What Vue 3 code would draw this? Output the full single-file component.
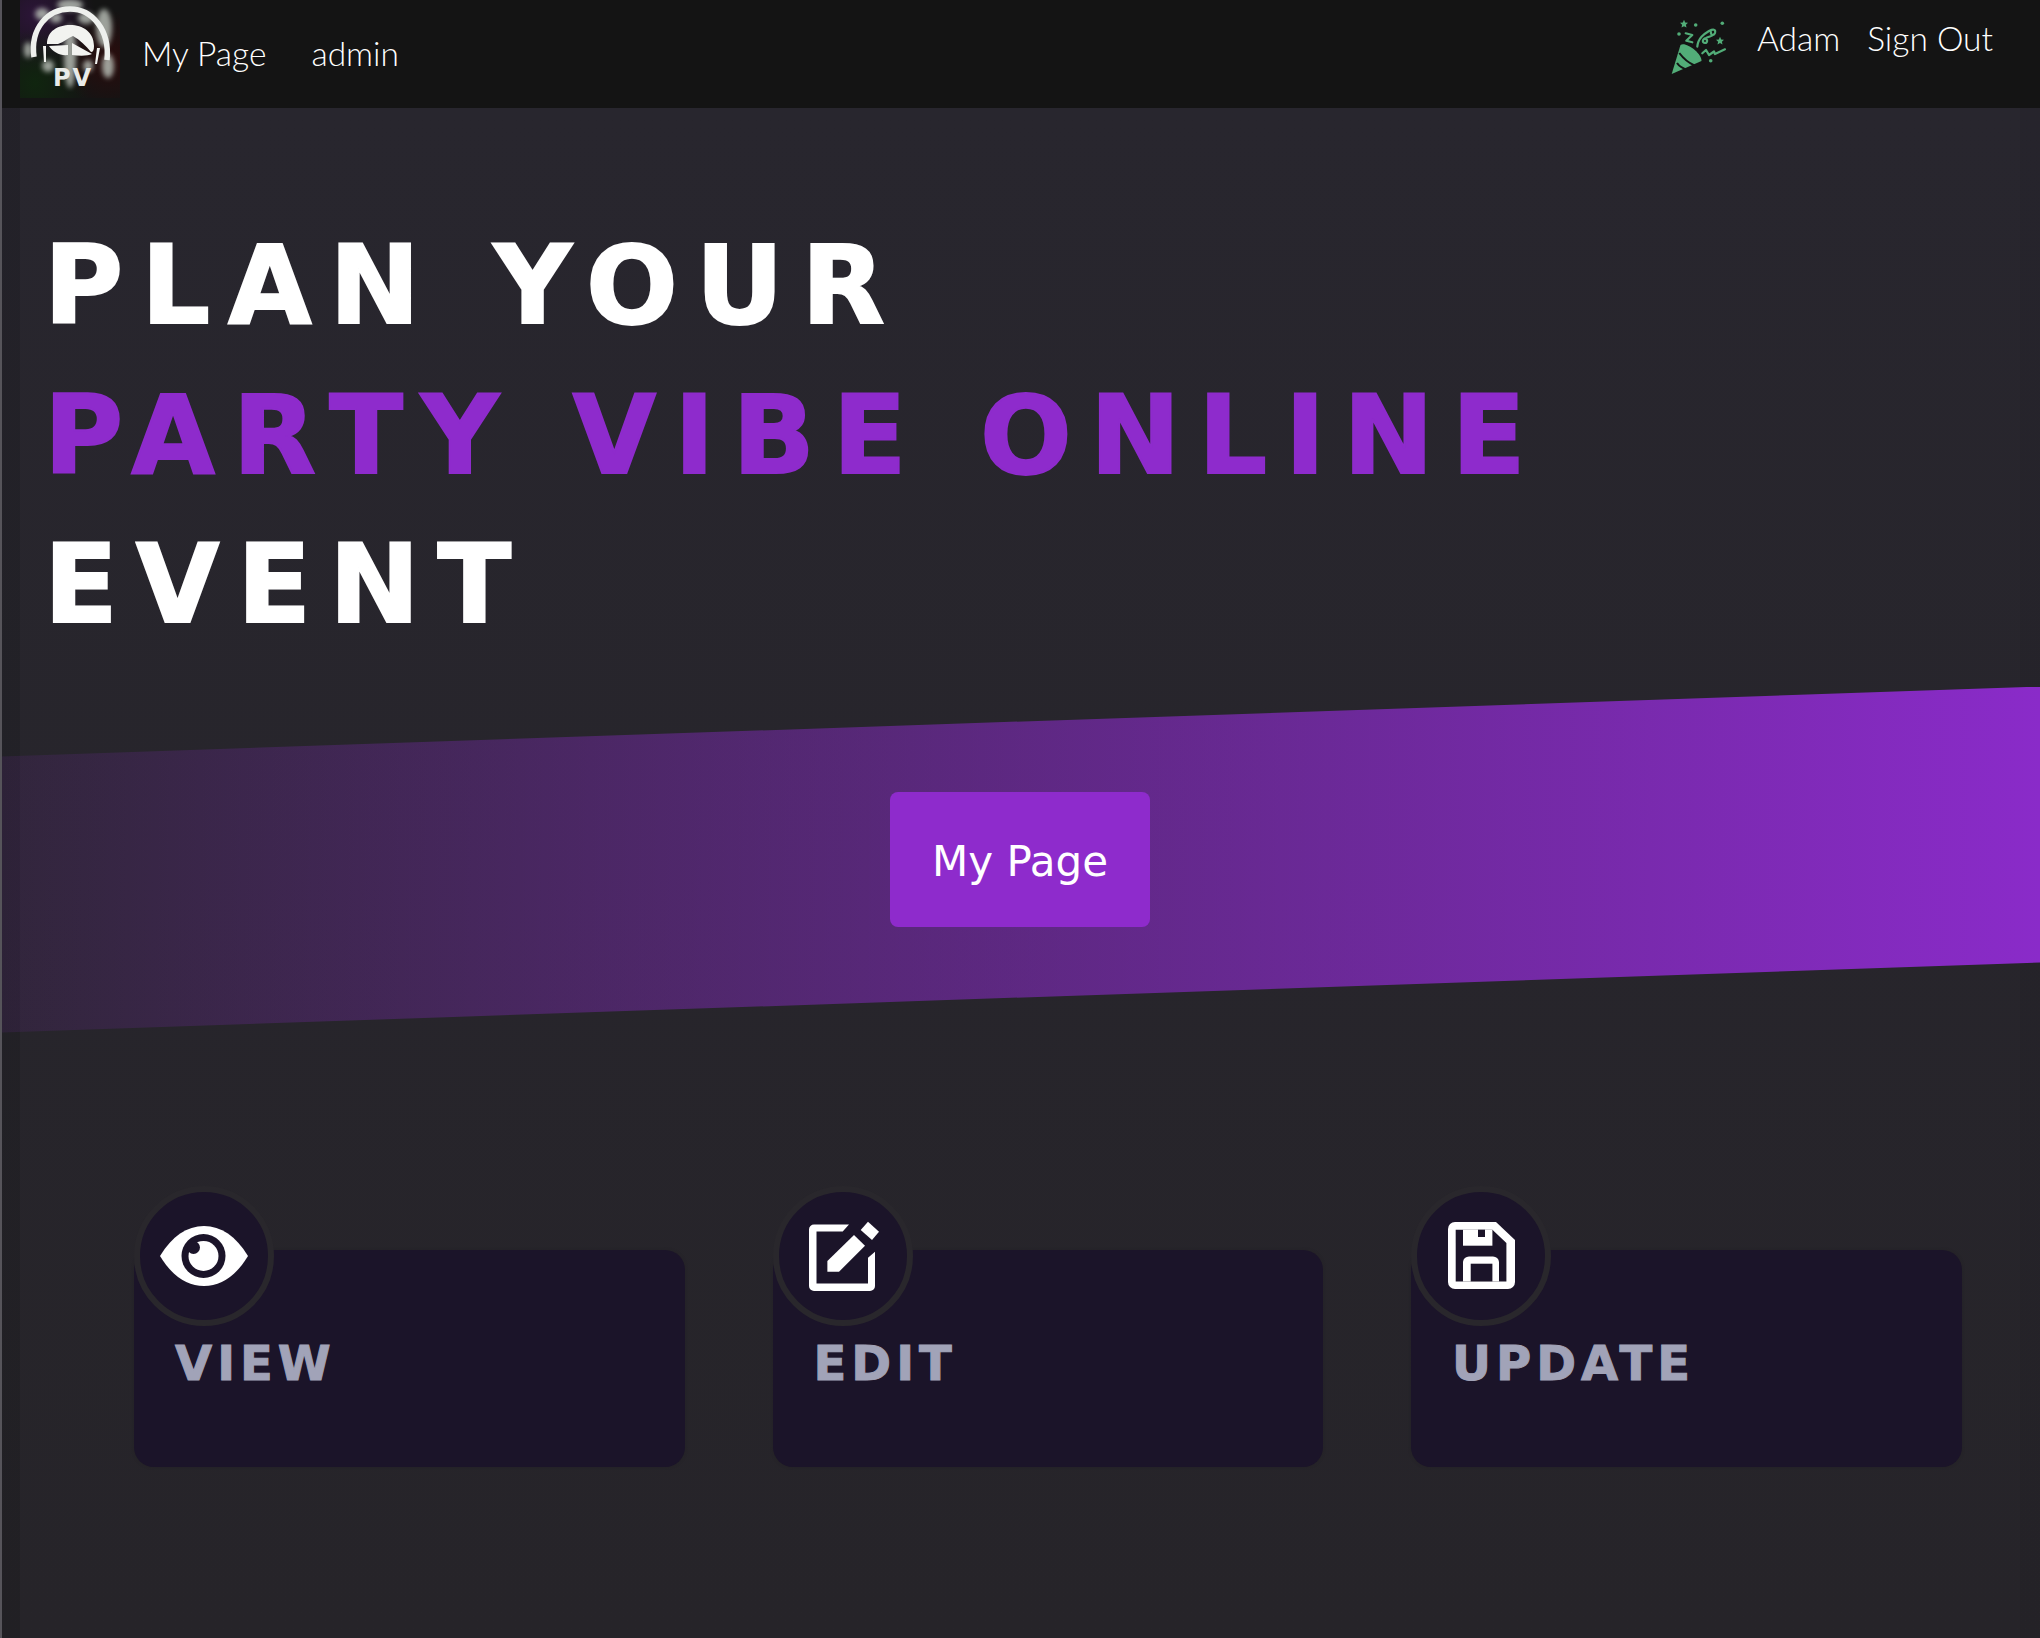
<script setup>
const cards = [
  { label: 'VIEW', icon: 'eye' },
  { label: 'EDIT', icon: 'edit' },
  { label: 'UPDATE', icon: 'save' },
]
const star = 'M0 -4 L1.200 -1.300 L4 -1 L1.900 1 L2.500 3.800 L0 2.400 L-2.500 3.800 L-1.900 1 L-4 -1 L-1.200 -1.300Z'
</script>

<template>
  <div class="page">
    <nav class="nav">
      <div class="nav-left">
        <svg class="logo" width="100" height="98" viewBox="0 0 100 98">
          <defs>
            <radialGradient id="lg1" cx="0.15" cy="0.15" r="0.6">
              <stop offset="0" stop-color="#2c1538" />
              <stop offset="1" stop-color="#141414" />
            </radialGradient>
            <radialGradient id="lg2" cx="0.15" cy="0.85" r="0.55">
              <stop offset="0" stop-color="#10250f" />
              <stop offset="1" stop-color="#10250f" stop-opacity="0" />
            </radialGradient>
            <radialGradient id="lg3" cx="0.9" cy="0.6" r="0.5">
              <stop offset="0" stop-color="#2a0c0c" />
              <stop offset="1" stop-color="#2a0c0c" stop-opacity="0" />
            </radialGradient>
            <filter id="lb1"><feGaussianBlur stdDeviation="2.500" /></filter>
            <filter id="lb2"><feGaussianBlur stdDeviation="0.5" /></filter>
          </defs>
          <rect width="100" height="98" fill="url(#lg1)" />
          <rect width="100" height="98" fill="url(#lg2)" />
          <rect width="100" height="98" fill="url(#lg3)" />
          <g filter="url(#lb1)" fill="#b4bab2" opacity="0.85">
            <ellipse cx="50" cy="5" rx="13" ry="6" />
            <ellipse cx="84" cy="28" rx="8" ry="19" />
            <ellipse cx="22" cy="14" rx="7" ry="6" />
            <ellipse cx="50" cy="56" rx="6" ry="32" />
            <ellipse cx="88" cy="66" rx="6" ry="12" />
            <ellipse cx="8" cy="50" rx="4" ry="8" />
            <ellipse cx="28" cy="66" rx="6" ry="6" />
            <ellipse cx="66" cy="18" rx="8" ry="6" />
            <ellipse cx="36" cy="18" rx="6" ry="5" />
            <ellipse cx="68" cy="66" rx="5" ry="6" />
          </g>
          <g filter="url(#lb2)">
            <path d="M14 57 C10 28 28 9 50 9 C72 9 90 30 87 60" fill="none" stroke="#eef0ed" stroke-width="5.500" />
            <path d="M27 44 C27 31 38 25 50 25 C63 25 74 32 74 46 C74 50 73 52 71 52 C66 46 60 40 53 36 C48 38 44 42 38 44 Z" fill="#f2f3f0" />
            <path d="M29 46 L48 45 L48 55 C40 56 33 52 29 46Z M52 43 L72 54 C68 56 60 56 52 55Z" fill="#f2f3f0" />
            <path d="M23 46 L26 46 L26 62 L24 62Z M77 48 L80 48 L77 64 L75 64Z" fill="#f2f3f0" />
          </g>
          <text x="33" y="86" class="logo-text">PV</text>
        </svg>
        <a class="nav-link first">My Page</a>
        <a class="nav-link second">admin</a>
      </div>
      <div class="nav-right">
        <svg class="party" width="56" height="56" viewBox="0 0 56 56" fill="#52ad78">
          <path d="M.7 54 L9.500 25 C14 21 31 33 30.500 41 Z" />
          <path d="M8.300 33 C12 38 18 43 23.500 45.500 M6 43 C8 46 12 48.500 16.700 50" stroke="#141414" stroke-width="2" fill="none" />
          <g fill="none" stroke="#52ad78" stroke-width="2.200" stroke-linejoin="round" stroke-linecap="round">
            <path d="M14.700 13.300 L21.300 15 L15.300 20.700 L21.300 22.300" />
            <path d="M26.300 26.700 C27 18 33 14 38 11 C42 9 45 9 44 13 C43 16 39 15 40 12 M33 19 C37 18 37 23 34 23 C31 23 31 19 35 18 C39 16 43 16 44 13" />
            <path d="M31.300 33.300 L35 30 L38 35 L43 31.500 L44 34 L54 29.300" />
          </g>
          <path :d="star" transform="translate(13 3.800)" />
          <path :d="star" transform="translate(49 20.700)" />
          <circle cx="24.700" cy="5" r="1.800" />
          <circle cx="51.300" cy="3.300" r="1.800" />
          <circle cx="8" cy="14" r="1.800" />
          <circle cx="39.700" cy="40.700" r="1.800" />
        </svg>
        <a class="nav-link adam">Adam</a>
        <a class="nav-link out">Sign Out</a>
      </div>
    </nav>

    <main class="main">
      <h1 class="headline">
        <span class="line">PLAN YOUR</span>
        <span class="line purple">PARTY VIBE ONLINE</span>
        <span class="line">EVENT</span>
      </h1>

      <section class="band">
        <button class="cta">My Page</button>
      </section>

      <section class="cards">
        <article v-for="c in cards" :key="c.label" class="card">
          <div class="badge">
            <svg v-if="c.icon === 'eye'" width="88" height="60" viewBox="0 0 88 60">
              <path d="M0 30 C12 10 27 0 44 0 C61 0 76 10 88 30 C76 50 61 60 44 60 C27 60 12 50 0 30Z" fill="#fff" />
              <circle cx="43.500" cy="30" r="22" fill="#1b1429" />
              <circle cx="43.500" cy="30" r="15" fill="#fff" />
              <circle cx="33.500" cy="21.500" r="6.500" fill="#1b1429" />
            </svg>
            <svg v-else-if="c.icon === 'edit'" class="edit-icon" width="70" height="70" viewBox="0 0 70 70">
              <path fill-rule="evenodd" fill="#fff" d="M5 3.500 H40 L33.700 10.500 H7.500 V62.500 H59 V36.700 L66 30.700 V65 A5 5 0 0 1 61 70 H5 A5 5 0 0 1 0 65 V8.500 A5 5 0 0 1 5 3.500Z" />
              <path fill="#fff" d="M18.400 50.700 V40 L45 14 L56 24.700 L30 50.700Z" />
              <path fill="#fff" d="M59 .7 L70 10.700 L63 19 L51.700 9Z" />
            </svg>
            <svg v-else width="67" height="67" viewBox="0 0 67 67">
              <path fill="#fff" d="M7 0 H48 L67 18 V60 A7 7 0 0 1 60 67 H7 A7 7 0 0 1 0 60 V7 A7 7 0 0 1 7 0Z" />
              <path fill="#1b1429" d="M7.700 7.700 H44.400 L58.400 21 V59.400 H7.700Z" />
              <path fill="#fff" d="M15 7.700 H44.400 V23.700 H15Z" />
              <path fill="#1b1429" d="M30 7.700 H37 V15 H30Z" />
              <path fill="#fff" d="M15 59.400 V40 A6 6 0 0 1 21 34.400 H45 A6 6 0 0 1 51 40 V59.400Z" />
              <path fill="#1b1429" d="M22.700 41.700 H44.400 V59.400 H22.700Z" />
            </svg>
          </div>
          <h3 class="label">{{ c.label }}</h3>
        </article>
      </section>
    </main>
  </div>
</template>

<style>
html, body { margin: 0; background: #272529; }
</style>

<style scoped>
.page {
  width: 2040px;
  height: 1638px;
  overflow: hidden;
  position: relative;
  border-left: 2px solid #56545a;
  box-sizing: border-box;
  display: flex;
  flex-direction: column;
}
.nav {
  flex: none;
  height: 108px;
  background: #141414;
  display: flex;
  justify-content: space-between;
  align-items: flex-start;
  box-sizing: border-box;
  padding-left: 18px;
}
.nav-left, .nav-right { display: flex; align-items: flex-start; }
.logo { display: block; flex: none; }
.logo-text { font: 700 24px "DejaVu Sans", sans-serif; fill: #e9ebe8; letter-spacing: 2px; }
.nav-link {
  font-family: Lato, sans-serif;
  font-weight: 300;
  font-size: 33.500px;
  line-height: 40px;
  color: #fff;
  white-space: nowrap;
}
.first { margin: 33px 0 0 22px; }
.second { margin: 33px 0 0 45px; }
.party { margin: 20px 30px 0 0; overflow: visible; }
.adam { margin-top: 18px; }
.out { margin: 18px 47px 0 27px; }

.main {
  flex: 1;
  padding-top: 103px;
  background:
    linear-gradient(90deg, rgba(0, 0, 0, 0.12) 18px, transparent 18px, transparent calc(100% - 20px), rgba(0, 0, 0, 0.05) calc(100% - 20px)),
    linear-gradient(#28262e, #262429);
}
.headline {
  margin: 0 0 0 42px;
  font-family: "DejaVu Sans", sans-serif;
  font-weight: 700;
  font-size: 108px;
  line-height: 149.500px;
  letter-spacing: 18px;
  -webkit-text-stroke: 2px currentColor;
  color: #fff;
}
.line { display: block; white-space: nowrap; }
.purple { color: #8e2bcc; }

.band {
  margin-top: 27px;
  height: 346px;
  background: linear-gradient(90deg, rgba(142, 43, 204, 0.1), #8a2bc9);
  clip-path: polygon(0 70px, 100% 0, 100% 276px, 0 346px);
  display: flex;
  justify-content: center;
  align-items: center;
}
.cta {
  width: 260px;
  height: 135px;
  border: 0;
  border-radius: 8px;
  background: #8e2bcc;
  color: #fff;
  font-family: "DejaVu Sans", sans-serif;
  font-size: 42px;
  padding: 3px 0 0;
  margin: 0 2px 0 0;
}

.cards {
  display: grid;
  grid-template-columns: repeat(3, 550.500px);
  column-gap: 88px;
  margin: 217px 0 0 132px;
}
.card {
  position: relative;
  height: 217px;
  background: #1b1429;
  border-radius: 20px;
  box-shadow: 0 0 3px rgba(35, 33, 38, 0.8);
  padding: 84px 0 0 41px;
  box-sizing: border-box;
}
.badge {
  position: absolute;
  left: 0;
  top: -64px;
  width: 128px;
  height: 128px;
  border: 6px solid #29272c;
  border-radius: 50%;
  background: #1b1429;
  display: flex;
  align-items: center;
  justify-content: center;
}
.edit-icon { margin-left: 2px; }
.label {
  margin: 0;
  font-family: "DejaVu Sans", sans-serif;
  font-weight: 700;
  font-size: 48px;
  line-height: 58px;
  letter-spacing: 5px;
  -webkit-text-stroke: 1px currentColor;
  color: #a1a3b8;
}
</style>
